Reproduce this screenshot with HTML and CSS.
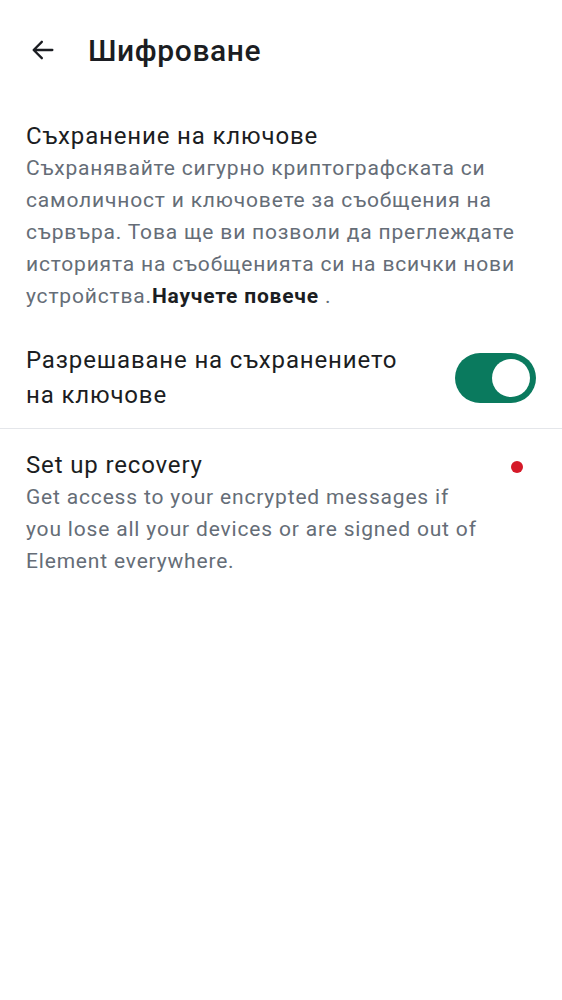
FILE: index.html
```html
<!DOCTYPE html>
<html lang="bg">
<head>
<meta charset="utf-8">
<link rel="stylesheet" href="styles.css">
</head>
<body>
<header class="topbar">
  <button class="back" aria-label="Назад">
    <svg width="28" height="28" viewBox="0 0 24 24"><path d="M20 12H5M11 5l-7 7 7 7" fill="none" stroke="#1b1d22" stroke-width="2" stroke-linecap="round" stroke-linejoin="round"/></svg>
  </button>
  <h1 class="title">Шифроване</h1>
</header>
<main>
  <section class="block">
    <div class="item-title">Съхранение на ключове</div>
    <p class="desc">Съхранявайте сигурно криптографската си самоличност и ключовете за съобщения на сървъра. Това ще ви позволи да преглеждате историята на съобщенията си на всички нови устройства.<b class="link">Научете повече</b> .</p>
  </section>
  <div class="row toggle-row">
    <div class="row-label">Разрешаване на съхранението на ключове</div>
    <div class="switch"><div class="thumb"></div></div>
  </div>
  <div class="divider"></div>
  <div class="row recovery">
    <div class="rec-text">
      <div class="item-title">Set up recovery</div>
      <p class="desc">Get access to your encrypted messages if you lose all your devices or are signed out of Element everywhere.</p>
    </div>
    <span class="dot"></span>
  </div>
</main>
</body>
</html>
```
FILE: styles.css
```css
* { box-sizing: border-box; }
body {
  margin: 0;
  background: #fff;
  font-family: Roboto, "Noto Sans", sans-serif;
  color: #1b1d22;
}
.topbar {
  display: flex;
  align-items: center;
  height: 100px;
  padding-left: 29px;
}
.back {
  border: 0;
  background: none;
  padding: 0;
  width: 28px;
  height: 28px;
  display: flex;
}
.title {
  margin: 0 0 0 31px;
  font-size: 30px;
  font-weight: 500;
  letter-spacing: 0.6px;
}
.block {
  padding: 20px 26px 0 26px;
}
.item-title {
  font-size: 24px;
  line-height: 32px;
  letter-spacing: 0.85px;
  color: #1b1d22;
}
.desc {
  margin: 0;
  font-size: 21px;
  line-height: 32px;
  letter-spacing: 0.82px;
  color: #656d77;
}
.link {
  color: #1b1d22;
  font-weight: 700;
  letter-spacing: 0.8px;
}
.row {
  display: flex;
  align-items: center;
  padding: 0 26px;
}
.toggle-row {
  margin-top: 31px;
  padding-bottom: 15px;
}
.row-label {
  flex: 1;
  font-size: 24px;
  line-height: 35px;
  letter-spacing: 0.85px;
  padding-right: 40px;
}
.switch {
  width: 81px;
  height: 50px;
  border-radius: 25px;
  background: #0a7a5e;
  display: flex;
  align-items: center;
  justify-content: flex-end;
  padding-right: 6px;
}
.thumb {
  width: 38px;
  height: 38px;
  border-radius: 50%;
  background: #fff;
}
.divider {
  height: 1px;
  background: #e4e6ea;
}
.recovery {
  align-items: flex-start;
  padding-top: 20px;
}
.rec-text {
  flex: 1;
  padding-right: 30px;
}
.dot {
  width: 12px;
  height: 12px;
  border-radius: 50%;
  background: #d51928;
  margin-top: 12px;
  margin-right: 13px;
}
```
